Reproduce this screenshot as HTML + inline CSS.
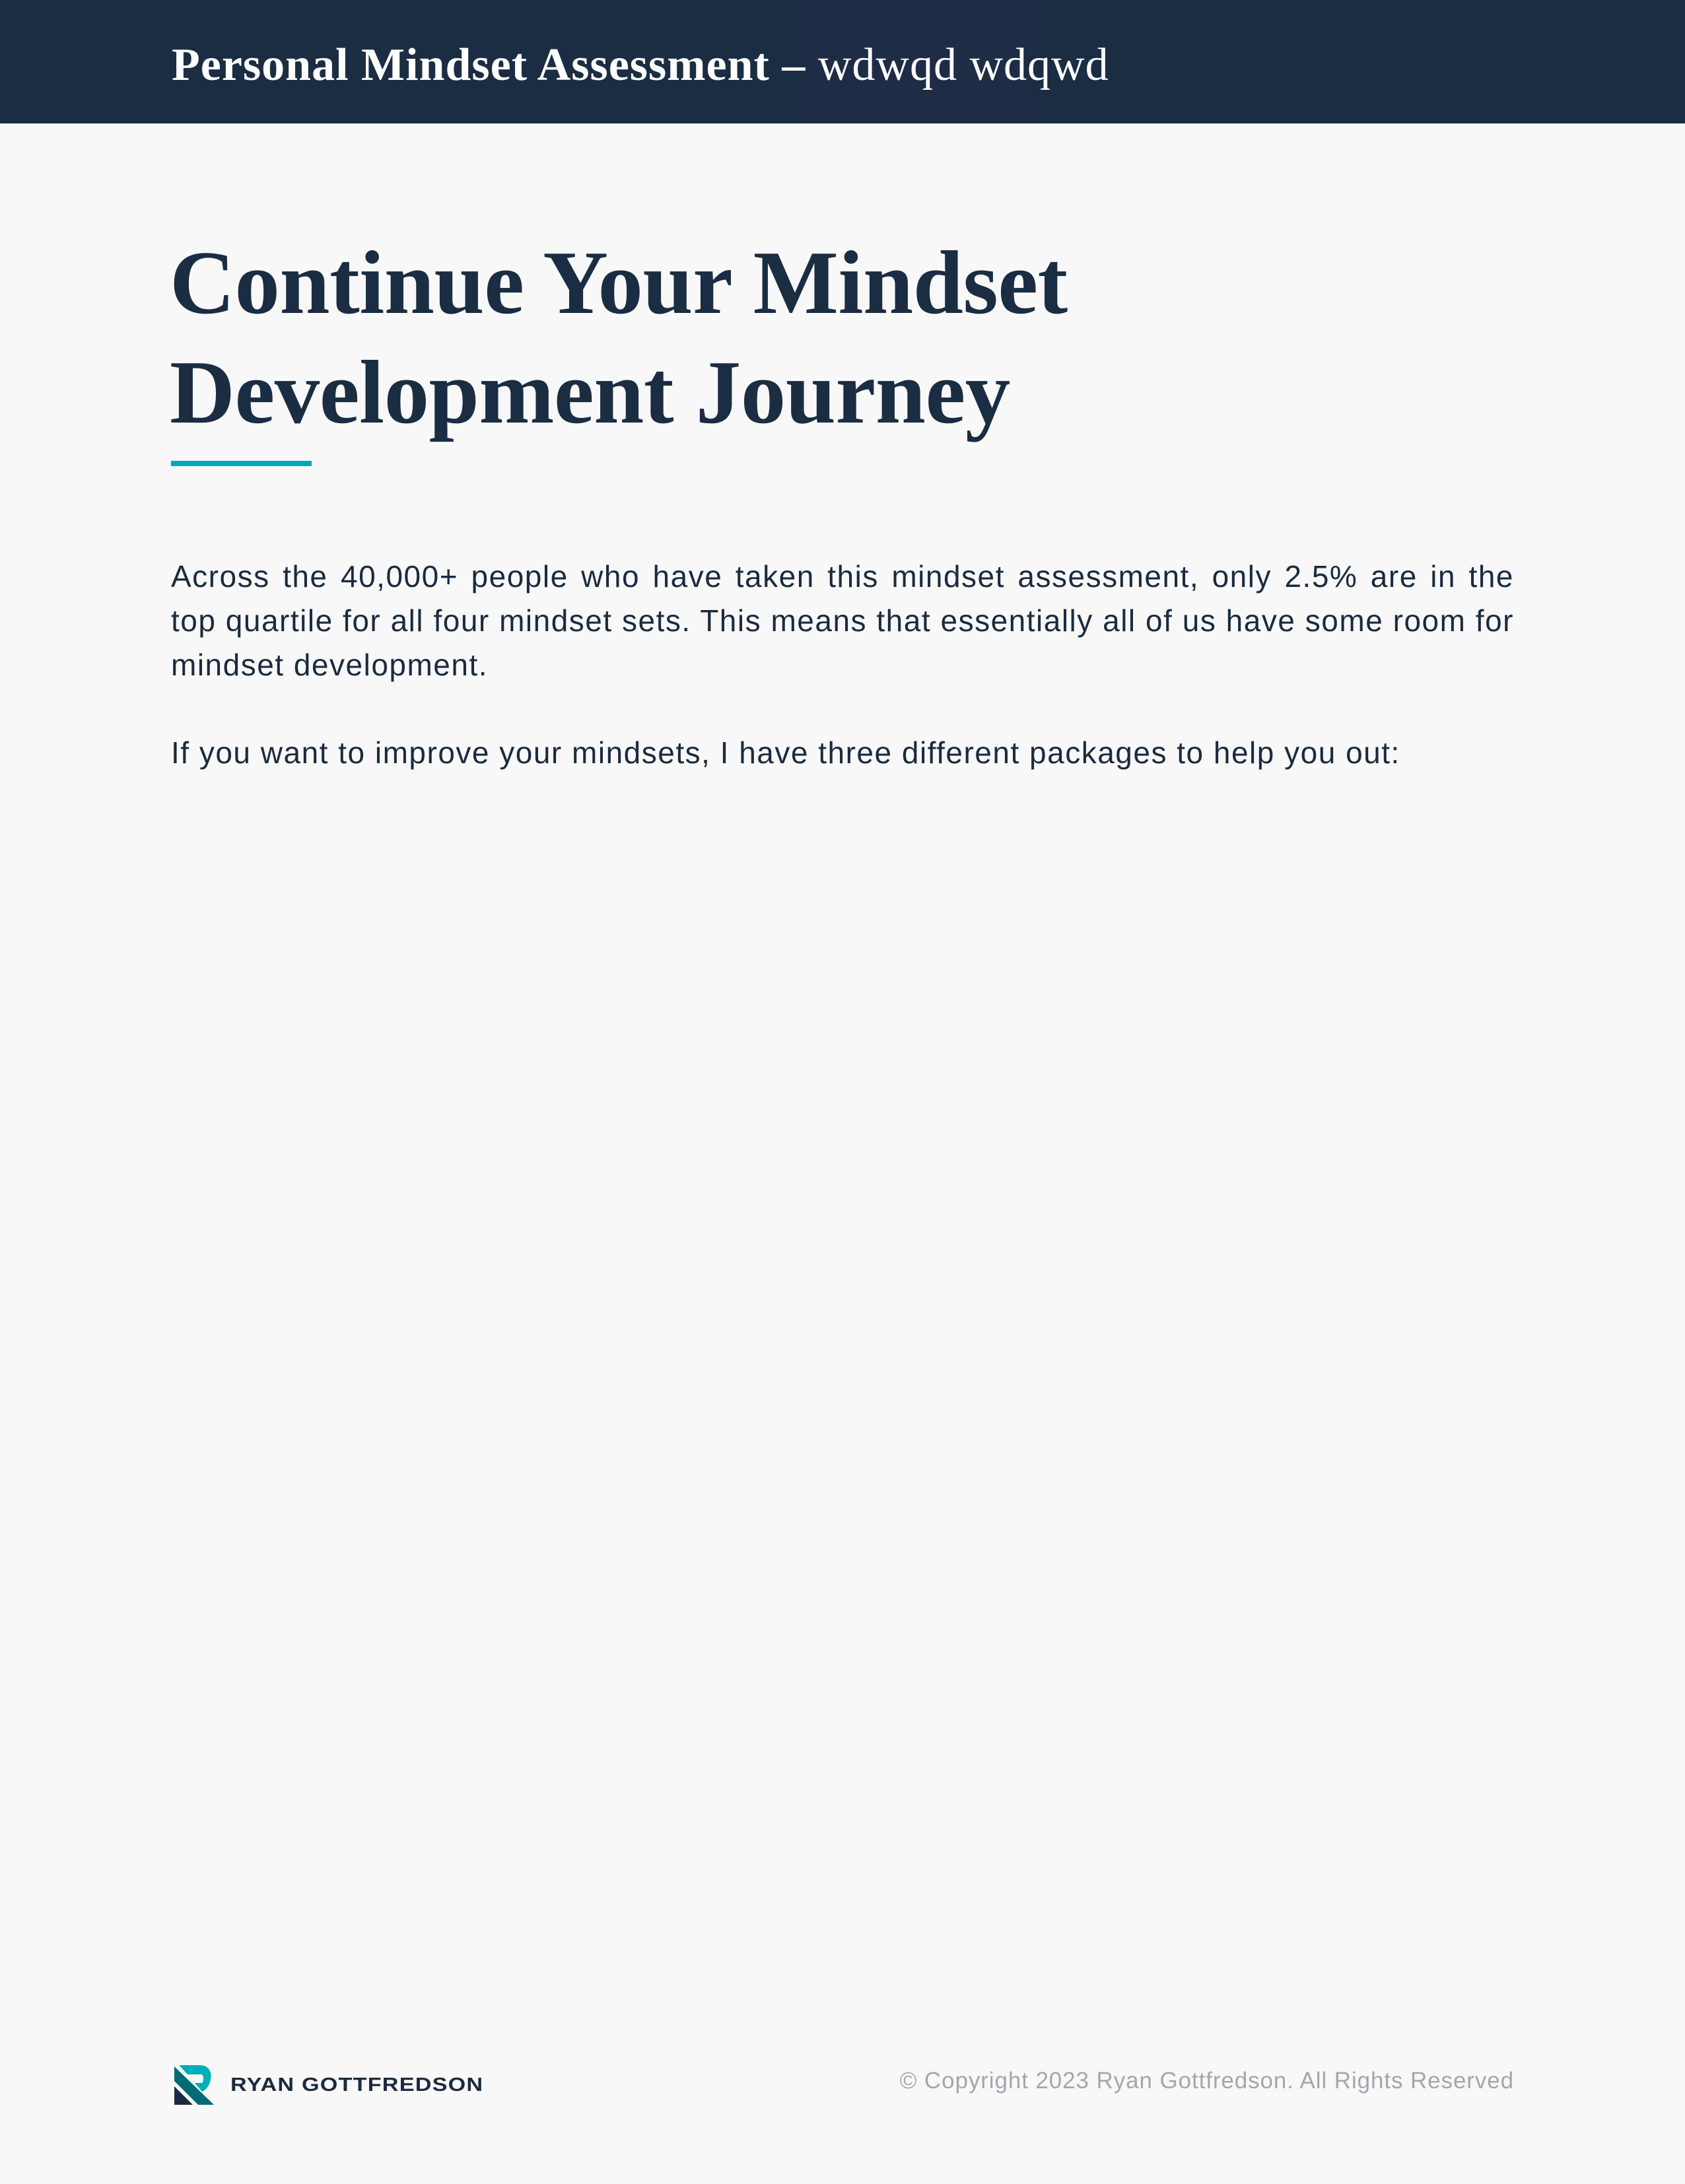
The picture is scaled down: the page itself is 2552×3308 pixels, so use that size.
<!DOCTYPE html>
<html><head><meta charset="utf-8"><style>
html,body{margin:0;padding:0}
body{width:2552px;height:3308px;background:#f8f8f8;position:relative;overflow:hidden;font-family:"Liberation Sans",sans-serif}
.hdr{position:absolute;left:0;top:0;width:2552px;height:187px;background:#1a2d42}
.hl{position:absolute;left:1213px;top:2px;width:354px;height:183px;background:#1f2c45}
.ht{position:absolute;left:260px;top:64px;font-family:"Liberation Serif",serif;font-size:70px;color:#fff;white-space:nowrap;line-height:1;letter-spacing:1px}
.ht b{font-weight:bold}
h1{position:absolute;left:257px;top:345px;margin:0;font-family:"Liberation Serif",serif;font-weight:bold;font-size:137px;line-height:166px;color:#1a2d42;letter-spacing:-0.5px}
.ul{position:absolute;left:259px;top:698px;width:213px;height:8px;background:#00a9b5}
.p{position:absolute;left:259px;width:2034px;font-size:46px;line-height:67px;color:#1a2b40;text-align:justify;letter-spacing:1.5px}
.ft{position:absolute;left:349px;top:3142px;font-size:29px;font-weight:bold;color:#1a2b40;letter-spacing:1px;transform:scaleX(1.18);transform-origin:left}
.cp{position:absolute;right:259px;top:3132px;font-size:35px;color:#a3a7ac;letter-spacing:0.9px}
</style></head><body>
<div class="hdr"><div class="hl"></div><div class="ht"><b>Personal Mindset Assessment – </b>wdwqd wdqwd</div></div>
<h1>Continue Your Mindset<br>Development Journey</h1>
<div class="ul"></div>
<div class="p" style="top:840px">Across the 40,000+ people who have taken this mindset assessment, only 2.5% are in the top quartile for all four mindset sets. This means that essentially all of us have some room for mindset development.</div>
<div class="p" style="top:1107px">If you want to improve your mindsets, I have three different packages to help you out:</div>
<svg style="position:absolute;left:262px;top:3126px" width="64" height="64" viewBox="0 0 64 64">
<path d="M9 2 H40 C56 2 59 14 57 24 C55 33 50 40 44 42 L33 29 H43 C47 29 47 16 43 16 H22 Z" fill="#00aeb8"/>
<path d="M2 4 L62 62 H38 L2 26 Z" fill="#006b74"/>
<path d="M2 34 L30 62 H2 Z" fill="#1a2b40"/>
</svg>
<div class="ft">RYAN GOTTFREDSON</div>
<div class="cp">© Copyright 2023 Ryan Gottfredson. All Rights Reserved</div>
</body></html>
